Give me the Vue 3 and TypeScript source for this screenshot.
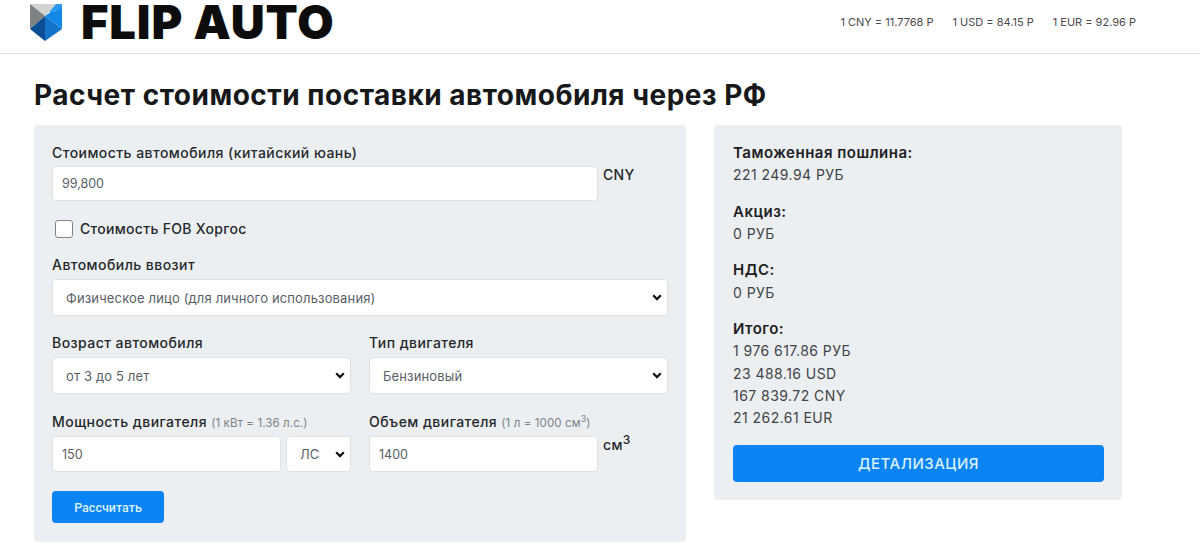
<template>
  <div class="page">
    <header class="topbar">
      <div class="brand">
        <svg class="logo" width="34" height="38" viewBox="0 0 34 38">
          <polygon points="1,0 27,0 16,12" fill="#d2d2d0" />
          <polygon points="1,0 16,12 1,25" fill="#7f8285" />
          <polygon points="33,0 16,12 33,25" fill="#1288e8" />
          <polygon points="27,0 33,0 33,3 26,8 20,8" fill="#2b9af0" />
          <polygon points="1,25 16,12 16,37" fill="#0a4f94" />
          <polygon points="33,25 16,12 16,37" fill="#1273c9" />
        </svg>
        <span class="brand-name">FLIP AUTO</span>
      </div>
      <div class="rates">
        <span v-for="rate in rates" :key="rate">{{ rate }}</span>
      </div>
    </header>

    <main class="content">
      <h1 class="title">Расчет стоимости поставки автомобиля через РФ</h1>
      <div class="columns">
        <form class="panel form" @submit.prevent>
          <label class="label first">Стоимость автомобиля (китайский юань)</label>
          <div class="with-unit">
            <input class="field price" type="text" value="99,800" />
            <span class="unit">CNY</span>
          </div>

          <label class="check-row">
            <input class="check" type="checkbox" />
            <span>Стоимость FOB Хоргос</span>
          </label>

          <label class="label">Автомобиль ввозит</label>
          <select class="field select">
            <option>Физическое лицо (для личного использования)</option>
          </select>

          <div class="grid">
            <div>
              <label class="label">Возраст автомобиля</label>
              <select class="field select">
                <option>от 3 до 5 лет</option>
              </select>
            </div>
            <div>
              <label class="label">Тип двигателя</label>
              <select class="field select">
                <option>Бензиновый</option>
              </select>
            </div>
            <div>
              <label class="label">Мощность двигателя <small>(1 кВт = 1.36 л.с.)</small></label>
              <div class="power">
                <input class="field short" type="text" value="150" />
                <select class="field select unit-select">
                  <option>ЛС</option>
                </select>
              </div>
            </div>
            <div>
              <label class="label">Объем двигателя <small>(1 л = 1000 см<sup>3</sup>)</small></label>
              <div class="with-unit">
                <input class="field short" type="text" value="1400" />
                <span class="unit">см<sup>3</sup></span>
              </div>
            </div>
          </div>

          <button class="btn calc" type="submit">Рассчитать</button>
        </form>

        <aside class="panel summary">
          <div v-for="item in summary" :key="item.title" class="group">
            <div class="group-title">{{ item.title }}</div>
            <div v-for="line in item.lines" :key="line" class="group-line">{{ line }}</div>
          </div>
          <button class="btn details" type="button">ДЕТАЛИЗАЦИЯ</button>
        </aside>
      </div>
    </main>
  </div>
</template>

<script setup lang="ts">
interface SummaryItem {
  title: string
  lines: string[]
}

const rates: string[] = ['1 CNY = 11.7768 Р', '1 USD = 84.15 Р', '1 EUR = 92.96 Р']

const summary: SummaryItem[] = [
  { title: 'Таможенная пошлина:', lines: ['221 249.94 РУБ'] },
  { title: 'Акциз:', lines: ['0 РУБ'] },
  { title: 'НДС:', lines: ['0 РУБ'] },
  { title: 'Итого:', lines: ['1 976 617.86 РУБ', '23 488.16 USD', '167 839.72 CNY', '21 262.61 EUR'] }
]
</script>

<style>
html,
body {
  margin: 0;
  background: #fff;
}
</style>

<style scoped>
.page {
  height: 554px;
  overflow: hidden;
  font-family: "Inter", "Noto Sans", sans-serif;
  color: #212529;
}

.topbar {
  height: 54px;
  box-sizing: border-box;
  border-bottom: 1px solid #dedede;
  display: flex;
  justify-content: space-between;
  align-items: flex-start;
  padding: 0 64px 0 29px;
}

.brand {
  display: flex;
  align-items: flex-start;
  gap: 18px;
}

.logo {
  display: block;
  margin-top: 4px;
}

.brand-name {
  font-size: 47px;
  line-height: 44px;
  font-weight: 900;
  color: #0c0c0c;
  letter-spacing: 0.9px;
}

.rates {
  display: flex;
  gap: 19px;
  font-size: 11px;
  line-height: 14px;
  color: #4a4a4a;
  margin-top: 15px;
}

.content {
  padding: 0 0 0 34px;
}

.title {
  margin: 24px 0 13px;
  font-size: 28px;
  line-height: 34px;
  font-weight: 700;
  letter-spacing: 0.5px;
  color: #16181a;
}

.columns {
  display: flex;
  align-items: flex-start;
  gap: 28px;
}

.panel {
  background: #eceff1;
  border-radius: 4px;
  box-sizing: border-box;
}

.form {
  width: 652px;
  padding: 18px 18px 19px;
}

.label {
  display: block;
  height: 20px;
  font-size: 14px;
  line-height: 20px;
  font-weight: 500;
  letter-spacing: 0.45px;
  color: #25282b;
  margin-bottom: 4px;
  white-space: nowrap;
}

.label.first {
  margin-bottom: 3px;
}

.label small {
  font-size: 11.5px;
  font-weight: 400;
  letter-spacing: 0.1px;
  color: #7d8388;
}

.label sup {
  font-size: 9px;
  line-height: 0;
}

.field {
  box-sizing: border-box;
  border: 1px solid #dfe2e4;
  border-radius: 4px;
  background-color: #fff;
  color: #5a6066;
  font-family: inherit;
  font-size: 12.5px;
  outline: none;
  display: block;
}

.with-unit {
  display: flex;
  align-items: flex-start;
  gap: 5px;
}

.price {
  width: 546px;
  height: 35px;
  padding: 0 9px;
}

.unit {
  font-size: 14px;
  line-height: 18px;
  font-weight: 500;
  letter-spacing: 0.3px;
  color: #25282b;
  white-space: nowrap;
}

.unit sup {
  font-size: 12px;
  line-height: 0;
}

.check-row {
  display: flex;
  align-items: center;
  gap: 7px;
  height: 18px;
  margin: 19px 0 17px 3px;
  font-size: 14px;
  font-weight: 500;
  letter-spacing: 0.3px;
  color: #25282b;
}

.check-row span {
  margin-top: -2px;
}

.check {
  appearance: none;
  box-sizing: border-box;
  width: 18px;
  height: 18px;
  margin: 0;
  background: #fff;
  border: 1px solid #808488;
  border-radius: 3px;
}

.select {
  appearance: none;
  width: 100%;
  height: 37px;
  padding: 0 24px 0 13px;
  font-size: 13px;
  letter-spacing: 0.15px;
  background-image: url("data:image/svg+xml,%3Csvg xmlns='http://www.w3.org/2000/svg' width='10' height='7' viewBox='0 0 10 7'%3E%3Cpath d='M1.2 1.3 5 5.1 8.8 1.3' fill='none' stroke='%23111' stroke-width='2.2'/%3E%3C/svg%3E");
  background-repeat: no-repeat;
  background-position: right 5px center;
}

.grid {
  display: grid;
  grid-template-columns: 299px 299px;
  column-gap: 18px;
  row-gap: 18px;
  margin-top: 17px;
}

.power {
  display: flex;
  gap: 5px;
}

.short {
  width: 229px;
  height: 36px;
  padding: 0 9px;
}

.unit-select {
  width: 65px;
  height: 36px;
}

.btn {
  display: block;
  box-sizing: border-box;
  border: none;
  border-radius: 4px;
  background: #0a84f5;
  color: #d8f0ff;
  font-family: inherit;
  cursor: pointer;
}

.calc {
  width: 112px;
  height: 32px;
  margin-top: 19px;
  font-family: "Roboto", sans-serif;
  font-size: 12.5px;
  font-weight: 500;
}

.summary {
  width: 408px;
  padding: 17px 18px 18px 19px;
}

.group {
  margin-bottom: 14.3px;
  font-size: 14px;
  line-height: 22.2px;
}

.group-title {
  font-size: 15px;
  font-weight: 600;
  letter-spacing: 0.5px;
  color: #1d2023;
}

.group-line {
  letter-spacing: 0.45px;
  color: #3f4448;
}

.details {
  width: 371px;
  height: 37px;
  margin-top: 16px;
  font-size: 15px;
  font-weight: 500;
  letter-spacing: 0.5px;
}
</style>
